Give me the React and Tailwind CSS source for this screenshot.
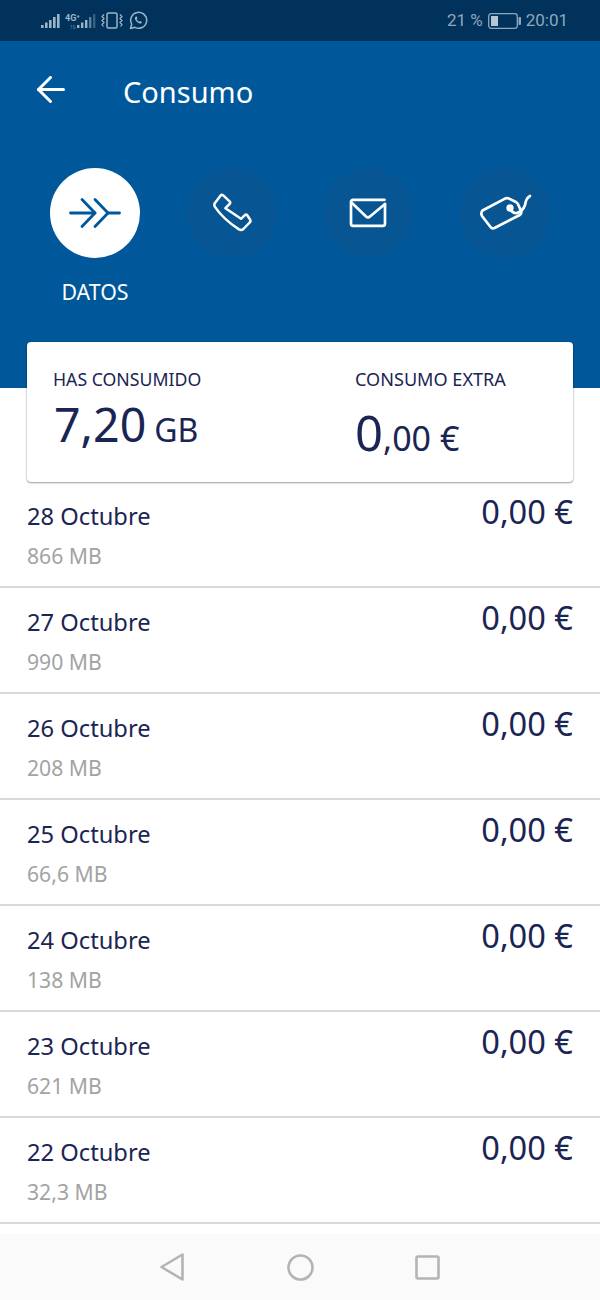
const rows = [
  ["28 Octubre", "866 MB"],
  ["27 Octubre", "990 MB"],
  ["26 Octubre", "208 MB"],
  ["25 Octubre", "66,6 MB"],
  ["24 Octubre", "138 MB"],
  ["23 Octubre", "621 MB"],
  ["22 Octubre", "32,3 MB"],
];

function StatusLeft() {
  return (
    <div className="flex items-center ml-[41px]">
      <svg width="19" height="17" viewBox="0 0 19 17">
        <g fill="#9db4c8" transform="translate(0 2)">
          <rect x="0" y="11" width="2.6" height="3" />
          <rect x="4" y="8.500" width="2.6" height="5.500" />
          <rect x="8" y="6" width="2.6" height="8" />
          <rect x="12" y="3" width="2.6" height="11" />
          <rect x="16" y="0" width="2.6" height="14" />
        </g>
      </svg>
      <div className="relative w-[31px] h-[19px] ml-[5px]">
        <svg width="31" height="19" viewBox="0 0 31 19" className="absolute left-0 top-0">
          <g transform="translate(12 3)" fill="#9db4c8">
            <rect x="0" y="11" width="2.4" height="3" />
            <rect x="4" y="8.500" width="2.4" height="5.500" />
            <rect x="8" y="6" width="2.4" height="8" />
            <rect x="12" y="3" width="2.4" height="11" opacity="0.6" />
            <rect x="16" y="0" width="2.4" height="14" opacity="0.35" />
          </g>
        </svg>
        <span className="absolute left-0 top-[2px] text-[9px] leading-[10px] font-bold text-[#9db4c8] font-['Roboto',sans-serif]">4G⁺</span>
        <span className="absolute left-[5px] top-[13px] text-[5px] leading-[6px] text-[#6f8ea8]">1S</span>
      </div>
      <svg width="22" height="17" viewBox="0 0 22 17" fill="none" stroke="#9db4c8" strokeWidth="1.500" className="ml-[5px]">
        <rect x="6" y="1" width="10" height="15" rx="1.500" />
        <path d="M3 2.500L1 4.500l2 2-2 2 2 2-2 2 1.500 2M19 2.500l2 2-2 2 2 2-2 2 2 2-1.500 2" strokeWidth="1.200" />
      </svg>
      <svg width="19" height="19" viewBox="0 0 19 19" fill="none" stroke="#9db4c8" strokeWidth="1.500" className="ml-[6px]">
        <path d="M1.500 17.500l1.200-4.300A8 8 0 1 1 5.800 16.300z" strokeLinejoin="round" />
        <path d="M6.600 5.800c-1 .8-.9 2.200.2 3.800 1.200 1.700 2.700 2.900 4.200 3 1 .1 1.900-.6 2-1.500l-2-1.200-.9.8c-1-.4-2-1.400-2.400-2.500l.8-.9-.9-2.100z" fill="#9db4c8" stroke="none" />
      </svg>
    </div>
  );
}

function Battery() {
  return (
    <svg width="33" height="16" viewBox="0 0 33 16" fill="none">
      <rect x="0.7" y="0.7" width="28.600" height="14.600" rx="2.500" stroke="#8fa8bd" strokeWidth="1.300" />
      <rect x="3" y="3" width="7" height="10" fill="#b5c6d4" />
      <rect x="30.500" y="4" width="2.500" height="8" rx="1" fill="#8fa8bd" />
    </svg>
  );
}

function DataIcon() {
  return (
    <svg width="52" height="34" viewBox="0 0 52 34" fill="none" stroke="#00589b" strokeWidth="2.800" strokeLinecap="round" strokeLinejoin="round">
      <path d="M1.500 17H26" />
      <path d="M39 17h11.500" />
      <path d="M13 3.500L26 17 13 30.500" />
      <path d="M26 3.500L39 17 26 30.500" />
    </svg>
  );
}

function PhoneIcon() {
  return (
    <svg width="40" height="40" viewBox="0 0 40 40" fill="none" stroke="white" strokeWidth="2.500" strokeLinejoin="round">
      <path d="M2.600 10.600L8.600 2.600Q9.800 1.200 11.200 2.400L17.600 8.400Q18.800 9.600 17.600 11L13.400 15.200L29 25.800L32.600 22.400Q34 21 35.200 22.200L38.200 26.800Q39 28.200 37.800 29.400L31.400 36Q29.400 37.800 27 36.400Q11 26 2.800 13.600Q2 12 2.600 10.600Z" />
    </svg>
  );
}

function MailIcon() {
  return (
    <svg width="38" height="30" viewBox="0 0 38 30" fill="none" stroke="white" strokeWidth="2.700" strokeLinecap="round" strokeLinejoin="round">
      <path d="M35.500 1.800H4a2 2 0 0 0-2 2v22a2 2 0 0 0 2 2h30a2 2 0 0 0 2-2V6" />
      <path d="M3 5l14 13.500c1.200 1.100 2.800 1.100 4 0L36 6" />
    </svg>
  );
}

function TagIcon() {
  return (
    <svg width="52" height="36" viewBox="0 0 52 36" fill="none" stroke="white" strokeWidth="2.700" strokeLinecap="round" strokeLinejoin="round" className="overflow-visible">
      <path d="M3.500 15.500L26 3.600Q28 2.800 30 3.600L37 7Q38.500 8 39.200 9.500L42 16Q43 18.500 40.800 20L15.500 33Q13 34 11.500 32L3 21Q1.500 18 3.500 15.500Z" />
      <circle cx="31" cy="13" r="2.300" fill="white" />
      <path d="M31 13.500Q34 19 38 18Q44 16 46 10Q47 3 51 1" />
    </svg>
  );
}

function CircleBtn({ children, active, className = "" }) {
  return (
    <div className={`w-[90px] h-[90px] rounded-full flex items-center justify-center ${active ? "bg-white" : "bg-[#075592]"} ${className}`}>
      {children}
    </div>
  );
}

export default function App() {
  return (
    <div className="w-[600px] h-[1300px] bg-white overflow-hidden flex flex-col font-['Noto_Sans',sans-serif] text-[#1b2553]">
      <div className="h-[41px] shrink-0 bg-[#00325b] flex items-center justify-between">
        <StatusLeft />
        <div className="flex items-center gap-[5px] mr-[32px] text-[#8fa8bd] text-[17px] leading-none font-['Roboto',sans-serif]">
          <span>21 %</span>
          <Battery />
          <span>20:01</span>
        </div>
      </div>

      <div className="h-[347px] shrink-0 bg-[#00589b]">
        <div className="flex items-center pt-[32px] h-[68px]">
          <svg width="28" height="27" viewBox="0 0 28 27" fill="none" stroke="white" strokeWidth="3" strokeLinecap="round" strokeLinejoin="round" className="ml-[37px] mb-[4px]">
            <path d="M1.500 13.500H26.500" />
            <path d="M13.500 1.500L1.500 13.500 13.500 25.500" />
          </svg>
          <span className="ml-[58px] text-[29px] leading-none text-white">Consumo</span>
        </div>
        <div className="flex pl-[50px] mt-[59px]">
          <div className="w-[90px] flex flex-col items-center">
            <CircleBtn active><DataIcon /></CircleBtn>
            <span className="mt-[21px] text-[21.300px] leading-[26px] text-white whitespace-nowrap">DATOS</span>
          </div>
          <CircleBtn className="ml-[47px]"><PhoneIcon /></CircleBtn>
          <CircleBtn className="ml-[46px]"><MailIcon /></CircleBtn>
          <CircleBtn className="ml-[47px]"><TagIcon /></CircleBtn>
        </div>
      </div>

      <div className="-mt-[46px] mx-[27px] h-[140px] shrink-0 bg-white rounded-[4px] shadow-[0_1px_2px_rgba(0,0,0,0.35),0_0_1.500px_rgba(0,0,0,0.3)] flex">
        <div className="ml-[26px] w-[302px] pt-[25px]">
          <div className="text-[17.700px] leading-[24px] whitespace-nowrap">HAS CONSUMIDO</div>
          <div className="flex items-baseline mt-[6px] leading-[54px]">
            <span className="text-[46.500px] leading-[54px] ml-[1px]">7,20</span>
            <span className="ml-[8px] text-[32px] leading-[54px]">GB</span>
          </div>
        </div>
        <div className="pt-[25px]">
          <div className="text-[18.100px] leading-[24px] whitespace-nowrap">CONSUMO EXTRA</div>
          <div className="flex items-baseline mt-[14px] leading-[54px]">
            <span className="text-[49px] leading-[54px]">0</span>
            <span className="text-[34px] leading-[54px]">,00 €</span>
          </div>
        </div>
      </div>

      <div className="flex-1">
        {rows.map(([d, mb]) => (
          <div key={d} className="h-[106px] box-border border-b-2 border-[#d9d9d9] px-[27px] flex justify-between">
            <div className="pt-[18px]">
              <div className="text-[23.700px] leading-[32px] whitespace-nowrap">{d}</div>
              <div className="mt-[10px] text-[21.200px] leading-[28px] text-[#a3a3a3] whitespace-nowrap">{mb}</div>
            </div>
            <div className="pt-[8px] text-[32.600px] leading-[44px] whitespace-nowrap">0,00 €</div>
          </div>
        ))}
      </div>

      <div className="h-[66px] shrink-0 bg-[#fafafa] flex items-center justify-center">
        <svg width="24" height="28" viewBox="0 0 24 28" fill="none" stroke="#b4b4b4" strokeWidth="2.600" strokeLinejoin="round">
          <path d="M22.500 1.500v25L1.500 14z" />
        </svg>
        <svg width="27" height="27" viewBox="0 0 27 27" fill="none" stroke="#b4b4b4" strokeWidth="2.600" className="ml-[103px]">
          <circle cx="13.500" cy="13.500" r="12" />
        </svg>
        <svg width="25" height="25" viewBox="0 0 25 25" fill="none" stroke="#b4b4b4" strokeWidth="2.600" className="ml-[101px]">
          <rect x="1.500" y="1.500" width="22" height="22" rx="1.500" />
        </svg>
      </div>
    </div>
  );
}
